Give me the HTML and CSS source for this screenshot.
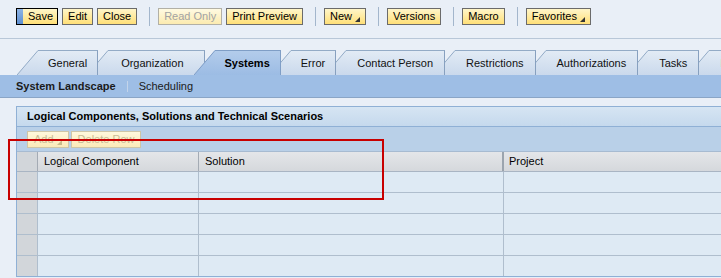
FILE: index.html
```html
<!DOCTYPE html>
<html>
<head>
    <title>Systems</title>
    <link rel="stylesheet" href="styles.css">
</head>
<body>
    <svg class="defs" width="0" height="0">
        <defs>
            <linearGradient id="tabFill" x1="0" y1="0" x2="0" y2="1">
                <stop offset="0" stop-color="#e2ebf5"/>
                <stop offset="1" stop-color="#cad9ec"/>
            </linearGradient>
            <linearGradient id="tabFillActive" x1="0" y1="0" x2="0" y2="1">
                <stop offset="0" stop-color="#b3cceb"/>
                <stop offset="1" stop-color="#9cbce4"/>
            </linearGradient>
        </defs>
    </svg>

    <div class="toolbar">
        <button class="btn btn-focus">Save</button>
        <button class="btn">Edit</button>
        <button class="btn">Close</button>
        <span class="sep"></span>
        <button class="btn" disabled>Read Only</button>
        <button class="btn">Print Preview</button>
        <span class="sep"></span>
        <button class="btn">New<span class="arrow"></span></button>
        <span class="sep"></span>
        <button class="btn">Versions</button>
        <span class="sep"></span>
        <button class="btn">Macro</button>
        <span class="sep"></span>
        <button class="btn">Favorites<span class="arrow"></span></button>
    </div>

    <div class="tabs">
        <div class="tab">
            <svg class="slant" width="21" height="25" viewBox="0 0 21 25"><polygon points="0,25 21,0 21,25" fill="url(#tabFill)"/><line x1="0" y1="25" x2="21" y2="0.5" stroke="#93abc6"/></svg>
            <span class="tab-label">General</span>
        </div>
        <div class="tab">
            <svg class="slant" width="21" height="25" viewBox="0 0 21 25"><polygon points="0,25 21,0 21,25" fill="url(#tabFill)"/><line x1="0" y1="25" x2="21" y2="0.5" stroke="#93abc6"/></svg>
            <span class="tab-label wide">Organization</span>
        </div>
        <div class="tab active">
            <svg class="slant" width="21" height="25" viewBox="0 0 21 25"><polygon points="0,25 21,0 21,25" fill="url(#tabFillActive)"/><line x1="0" y1="25" x2="21" y2="0.5" stroke="#7f9ec6"/></svg>
            <span class="tab-label">Systems</span>
        </div>
        <div class="tab">
            <svg class="slant" width="21" height="25" viewBox="0 0 21 25"><polygon points="0,25 21,0 21,25" fill="url(#tabFill)"/><line x1="0" y1="25" x2="21" y2="0.5" stroke="#93abc6"/></svg>
            <span class="tab-label">Error</span>
        </div>
        <div class="tab">
            <svg class="slant" width="21" height="25" viewBox="0 0 21 25"><polygon points="0,25 21,0 21,25" fill="url(#tabFill)"/><line x1="0" y1="25" x2="21" y2="0.5" stroke="#93abc6"/></svg>
            <span class="tab-label">Contact Person</span>
        </div>
        <div class="tab">
            <svg class="slant" width="21" height="25" viewBox="0 0 21 25"><polygon points="0,25 21,0 21,25" fill="url(#tabFill)"/><line x1="0" y1="25" x2="21" y2="0.5" stroke="#93abc6"/></svg>
            <span class="tab-label">Restrictions</span>
        </div>
        <div class="tab">
            <svg class="slant" width="21" height="25" viewBox="0 0 21 25"><polygon points="0,25 21,0 21,25" fill="url(#tabFill)"/><line x1="0" y1="25" x2="21" y2="0.5" stroke="#93abc6"/></svg>
            <span class="tab-label">Authorizations</span>
        </div>
        <div class="tab">
            <svg class="slant" width="21" height="25" viewBox="0 0 21 25"><polygon points="0,25 21,0 21,25" fill="url(#tabFill)"/><line x1="0" y1="25" x2="21" y2="0.5" stroke="#93abc6"/></svg>
            <span class="tab-label">Tasks</span>
        </div>
        <div class="tab">
            <svg class="slant" width="21" height="25" viewBox="0 0 21 25"><polygon points="0,25 21,0 21,25" fill="url(#tabFill)"/><line x1="0" y1="25" x2="21" y2="0.5" stroke="#93abc6"/></svg>
            <span class="tab-label">Documents</span>
        </div>
    </div>

    <div class="subnav">
        <span class="sub-active">System Landscape</span>
        <span class="sub-sep"></span>
        <span>Scheduling</span>
    </div>

    <div class="panel">
        <div class="panel-title">Logical Components, Solutions and Technical Scenarios</div>
        <div class="panel-tools">
            <button class="btn" disabled>Add<span class="arrow"></span></button>
            <button class="btn" disabled>Delete Row</button>
        </div>
        <div class="grid">
            <div class="row head">
                <div class="cell sel"></div>
                <div class="cell c1">Logical Component</div>
                <div class="cell c2">Solution</div>
                <div class="cell c3">Project</div>
            </div>
            <div class="row">
                <div class="cell sel"></div>
                <div class="cell c1"></div>
                <div class="cell c2"></div>
                <div class="cell c3"></div>
            </div>
            <div class="row">
                <div class="cell sel"></div>
                <div class="cell c1"></div>
                <div class="cell c2"></div>
                <div class="cell c3"></div>
            </div>
            <div class="row">
                <div class="cell sel"></div>
                <div class="cell c1"></div>
                <div class="cell c2"></div>
                <div class="cell c3"></div>
            </div>
            <div class="row">
                <div class="cell sel"></div>
                <div class="cell c1"></div>
                <div class="cell c2"></div>
                <div class="cell c3"></div>
            </div>
            <div class="row last">
                <div class="cell sel"></div>
                <div class="cell c1"></div>
                <div class="cell c2"></div>
                <div class="cell c3"></div>
            </div>
        </div>
    </div>

    <div class="highlight"></div>
</body>
</html>
```

FILE: styles.css
```css
body {
    font-family: "Liberation Sans", Arial, sans-serif;
    font-size: 11px;
    color: #000;
    margin: 0;
    padding: 0;
    background-color: #e9eff7;
    overflow: hidden;
    position: relative;
    height: 278px;
}
.defs {
    position: absolute;
}

/* top toolbar */
.toolbar {
    height: 39px;
    box-sizing: border-box;
    padding: 0 0 5px 16px;
    display: flex;
    align-items: center;
    border-bottom: 1px solid #b8c7d8;
}
.btn {
    font-family: inherit;
    font-size: 11px;
    color: #000;
    height: 17px;
    box-sizing: border-box;
    margin: 0 4px 0 0;
    padding: 0 5px;
    border: 1px solid #6b6b6b;
    background: linear-gradient(#fff6c9, #ffdf78);
    display: flex;
    align-items: center;
    position: relative;
    line-height: 15px;
}
.btn:disabled {
    color: #a3a3a3;
    border-color: #b2b0a6;
    background: linear-gradient(#fffae2, #fcebb0);
}
.btn-focus {
    border-color: #000;
    padding: 0 4px 0 11px;
}
.btn-focus::before {
    content: "";
    position: absolute;
    left: 0;
    top: 0;
    bottom: 0;
    width: 6px;
    background: linear-gradient(#8fb4e4, #5e8fd1);
}
.arrow {
    width: 0;
    height: 0;
    margin: 5px 0 0 3px;
    border-left: 5px solid transparent;
    border-bottom: 5px solid #333;
}
.btn:disabled .arrow {
    border-bottom-color: #c9bb8c;
}
.sep {
    width: 1px;
    height: 19px;
    background-color: #a3b6cc;
    margin: 0 8px 0 8px;
}

/* tab strip */
.tabs {
    height: 36px;
    box-sizing: border-box;
    padding: 11px 0 0 17px;
    display: flex;
    align-items: flex-end;
    white-space: nowrap;
}
.tab {
    display: flex;
    flex-shrink: 0;
    height: 25px;
    position: relative;
    margin-left: -11px;
}
.tab:first-child {
    margin-left: 0;
}
.tab:nth-child(1) { z-index: 9; }
.tab:nth-child(2) { z-index: 8; }
.tab:nth-child(3) { z-index: 7; }
.tab:nth-child(4) { z-index: 6; }
.tab:nth-child(5) { z-index: 5; }
.tab:nth-child(6) { z-index: 4; }
.tab:nth-child(7) { z-index: 3; }
.tab:nth-child(8) { z-index: 2; }
.tab:nth-child(9) { z-index: 1; }
.tab.active {
    z-index: 20;
}
.slant {
    display: block;
    flex-shrink: 0;
}
.tab-label {
    height: 25px;
    box-sizing: border-box;
    padding: 0 10px;
    line-height: 24px;
    text-align: center;
    background: linear-gradient(#e2ebf5, #cad9ec);
    border-top: 1px solid #93abc6;
    border-right: 1px solid #87a0bf;
    color: #111;
}
.tab:nth-child(n+5) .tab-label {
    padding: 0 11px;
}
.tab-label.wide {
    padding: 0 20px 0 13px;
}
.tab.active .tab-label {
    font-weight: bold;
    padding: 0 10px;
    background: linear-gradient(#b3cceb, #9cbce4);
    border-top-color: #7f9ec6;
    border-right-color: #7f9ec6;
    color: #000;
}

/* secondary navigation */
.subnav {
    height: 23px;
    box-sizing: border-box;
    background-color: #9ebee5;
    border-bottom: 1px solid #8aa5c6;
    display: flex;
    align-items: center;
    padding-left: 16px;
    color: #1a1a1a;
}
.sub-active {
    font-weight: bold;
}
.sub-sep {
    width: 1px;
    height: 11px;
    background-color: #c3d4ea;
    margin: 0 11px 0 11px;
}

/* panel with table */
.panel {
    margin: 8px 0 0 16px;
    width: 720px;
    border: 1px solid #8fb0d5;
    border-right: none;
}
.panel-title {
    height: 20px;
    box-sizing: border-box;
    padding-left: 10px;
    line-height: 19px;
    font-weight: bold;
    background: linear-gradient(#d6e5f3, #c5d9ed);
    border-bottom: 1px solid #8fb0d5;
}
.panel-tools {
    height: 25px;
    box-sizing: border-box;
    padding: 4px 0 0 10px;
    display: flex;
    align-items: flex-start;
    background-color: #b9d0e8;
    border-bottom: 1px solid #a7bbd1;
}
.panel-tools .btn {
    margin-right: 2px;
    padding: 0 6px;
}
.panel-tools .btn:disabled {
    color: #c9bc97;
    border-color: #cfc6a6;
    background: linear-gradient(#fff8dc, #fbeab8);
}
.row {
    display: flex;
    height: 21px;
    box-sizing: border-box;
    border-bottom: 1px solid #afbecd;
    background-color: #deeaf4;
}
.row.last {
    height: 20px;
    border-bottom: none;
}
.row.head {
    height: 20px;
    background: linear-gradient(#e4e6e9, #d5d8dc);
    border-bottom-color: #a9b5c3;
}
.cell {
    box-sizing: border-box;
    border-right: 1px solid #afbecd;
    padding-left: 6px;
    line-height: 19px;
    flex-shrink: 0;
}
.row.head .cell {
    border-right-color: #a4abb4;
}
.sel {
    width: 21px;
    background-color: #d2d6da;
    padding: 0;
}
.c1 {
    width: 161px;
}
.c2 {
    width: 305px;
}
.row.head .c2 {
    border-right: 2px solid #9ba4ae;
}
.row.head .c3 {
    padding-left: 5px;
}
.c3 {
    flex: 1;
    border-right: none;
}

/* annotation box drawn over the screen */
.highlight {
    position: absolute;
    left: 8px;
    top: 139px;
    width: 376px;
    height: 61px;
    box-sizing: border-box;
    border: 2px solid #c80000;
}
```
